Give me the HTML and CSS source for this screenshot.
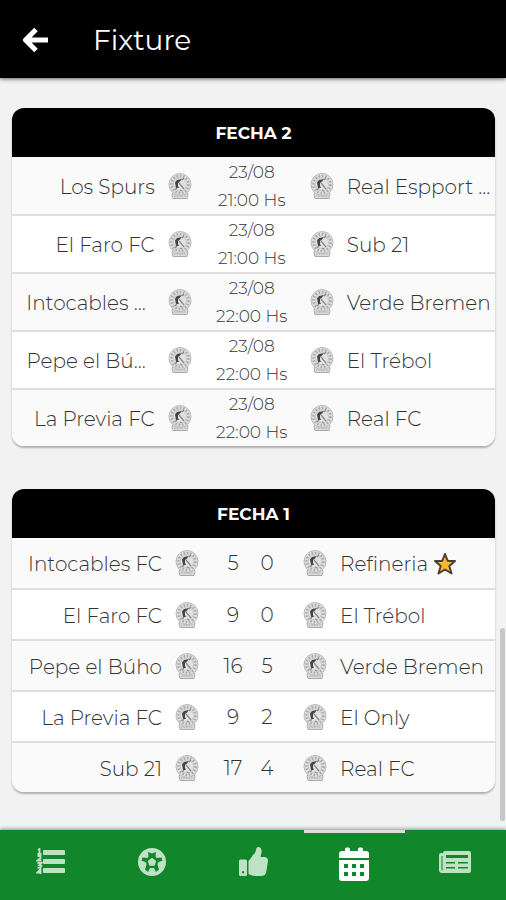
FILE: index.html
```
<!DOCTYPE html>
<html lang="es">
<head>
<meta charset="utf-8">
<meta name="viewport" content="width=device-width, initial-scale=1">
<title>Fixture</title>
<link rel="stylesheet" href="styles.css">
</head>
<body>
<svg class="defs" width="0" height="0" aria-hidden="true">
  <symbol id="crest" viewBox="0 0 24 26">
    <path d="M5 19h14l1 2.500-1 4H5l-1-4z" fill="#dadada" stroke="#aaa" stroke-width="1"/>
    <circle cx="12" cy="11.500" r="11" fill="#dedede" stroke="#bbb" stroke-width="1"/>
    <circle cx="12" cy="11.500" r="8.500" fill="none" stroke="#a8a8a8" stroke-width="2.600" stroke-dasharray="1.500 1.800"/>
    <circle cx="12" cy="11.500" r="6.500" fill="#e2e2e2" stroke="#bbb" stroke-width=".6"/>
    <path d="M7 9.500 9 7l5-1-2 2.500-2 1.500v3l1 2-3 0z" fill="#444"/>
    <path d="m11 10 5 6M14 7l2-2M7 17l2-2M12 17l2 1" stroke="#888" stroke-width="1.200"/>
    <path d="M6 23h12" stroke="#aaa" stroke-dasharray="1.500 1"/>
  </symbol>
</svg>
<header class="topbar">
  <button class="back" type="button" aria-label="Volver">
    <svg viewBox="0 0 26 26" width="26" height="26" fill="none" stroke="#fff" stroke-width="5" stroke-linejoin="round"><path d="M26 13H5M14 2.500 3.500 13 14 23.500"/></svg>
  </button>
  <h1 class="title">Fixture</h1>
</header>
<main class="content">
  <section class="card">
    <h2 class="card-title">FECHA 2</h2>
    <table class="matches upcoming">
      <colgroup><col class="home-col"><col class="crest-col"><col class="date-col"><col class="crest-col"><col></colgroup>
      <tbody>
      <tr><td class="home">Los Spurs</td><td class="crest"><svg><use href="#crest"/></svg></td><td class="date">23/08<br>21:00 Hs</td><td class="crest"><svg><use href="#crest"/></svg></td><td class="away">Real Espport ...</td></tr>
      <tr><td class="home">El Faro FC</td><td class="crest"><svg><use href="#crest"/></svg></td><td class="date">23/08<br>21:00 Hs</td><td class="crest"><svg><use href="#crest"/></svg></td><td class="away">Sub 21</td></tr>
      <tr><td class="home cut">Intocables ...</td><td class="crest"><svg><use href="#crest"/></svg></td><td class="date">23/08<br>22:00 Hs</td><td class="crest"><svg><use href="#crest"/></svg></td><td class="away">Verde Bremen</td></tr>
      <tr><td class="home cut">Pepe el Bú...</td><td class="crest"><svg><use href="#crest"/></svg></td><td class="date">23/08<br>22:00 Hs</td><td class="crest"><svg><use href="#crest"/></svg></td><td class="away">El Trébol</td></tr>
      <tr><td class="home">La Previa FC</td><td class="crest"><svg><use href="#crest"/></svg></td><td class="date">23/08<br>22:00 Hs</td><td class="crest"><svg><use href="#crest"/></svg></td><td class="away">Real FC</td></tr>
      </tbody>
    </table>
  </section>
  <section class="card">
    <h2 class="card-title">FECHA 1</h2>
    <table class="matches played">
      <colgroup><col class="home-col"><col class="crest-col"><col class="score-col"><col class="score-col"><col class="crest-col"><col></colgroup>
      <tbody>
      <tr><td class="home">Intocables FC</td><td class="crest"><svg><use href="#crest"/></svg></td><td class="score">5</td><td class="score last">0</td><td class="crest"><svg><use href="#crest"/></svg></td><td class="away">Refineria <svg class="star" viewBox="0 0 24 24" role="img" aria-label="Destacado"><path d="m12 2 2.800 7H22l-5.700 5 2.200 7.500L12 17.500l-6.500 4L7.700 14 2 9h7.200z"/></svg></td></tr>
      <tr><td class="home">El Faro FC</td><td class="crest"><svg><use href="#crest"/></svg></td><td class="score">9</td><td class="score last">0</td><td class="crest"><svg><use href="#crest"/></svg></td><td class="away">El Trébol</td></tr>
      <tr><td class="home">Pepe el Búho</td><td class="crest"><svg><use href="#crest"/></svg></td><td class="score">16</td><td class="score last">5</td><td class="crest"><svg><use href="#crest"/></svg></td><td class="away">Verde Bremen</td></tr>
      <tr><td class="home">La Previa FC</td><td class="crest"><svg><use href="#crest"/></svg></td><td class="score">9</td><td class="score last">2</td><td class="crest"><svg><use href="#crest"/></svg></td><td class="away">El Only</td></tr>
      <tr><td class="home">Sub 21</td><td class="crest"><svg><use href="#crest"/></svg></td><td class="score">17</td><td class="score last">4</td><td class="crest"><svg><use href="#crest"/></svg></td><td class="away">Real FC</td></tr>
      </tbody>
    </table>
  </section>
  <span class="scroll-thumb"></span>
</main>
<nav class="tabs">
  <a class="tab" href="#posiciones" aria-label="Posiciones">
    <svg viewBox="0 0 30 28" width="30" height="28"><g><rect x="7" y="2" width="22" height="5" rx="1"/><rect x="7" y="11" width="22" height="5" rx="1"/><rect x="7" y="20" width="22" height="5" rx="1"/></g><path d="M2 2 3.500 1v5M1.500 6h4M1.500 8h3v2l-3 2.500h4M1.500 15h4l-2 2c3 0 2.500 3-2 2.500M4.500 26v-5l-3 3.500h4" fill="none" stroke="#c0e2c4" stroke-width="1.800"/></svg>
  </a>
  <a class="tab" href="#goleadores" aria-label="Goleadores">
    <svg viewBox="0 0 28 28" width="28" height="28"><circle cx="14" cy="14" r="14"/><path fill="#12862b" d="m10 4 4 1.500L18 4l-.5 4.500 1 1.500 5-.5 1 3-4.500 2-.5 2 1.500 5-3 2.500-2-4h-4l-2 4-3-2.500 1.500-5-.5-2-4.500-2 1-3 5 .5 1-1.500z"/><path d="m14 9.800 4.200 3.100-1.600 4.900h-5.200l-1.600-4.900z"/></svg>
  </a>
  <a class="tab" href="#votar" aria-label="Votar">
    <svg viewBox="0 0 29 29" width="29" height="29"><path fill-rule="evenodd" d="M1.500 12.500h5Q8 12.500 8 14v13.500Q8 29 6.500 29h-5Q0 29 0 27.500V14q0-1.500 1.500-1.500M4 24a1.200 1.200 0 1 0 .1 0z"/><path d="M9.500 14c3-3 3.500-5.500 6-7.500C17.500 5 16.500 0 19 0c3 0 4 3 3.500 5.500L21.500 10H26q3 .5 3 3.500l-1.500 10Q27 29 22 29h-6q-3 0-6.500-2z"/></svg>
  </a>
  <a class="tab active" href="#fixture" aria-label="Fixture" aria-current="page">
    <svg viewBox="0 0 30 34" width="30" height="34"><path d="M6 4V2q0-1.500 1.500-1.500h2Q11 .5 11 2v2h8V2q0-1.500 1.500-1.500h2Q24 .5 24 2v2h3q3 0 3 3v4H0V7q0-3 3-3z"/><path fill-rule="evenodd" d="M0 13h30v18q0 3-3 3H3q-3 0-3-3zM5 17v4h4v-4zM13 17v4h4v-4zM21 17v4h4v-4zM5 25v4h4v-4zM13 25v4h4v-4zM21 25v4h4v-4z"/></svg>
  </a>
  <a class="tab" href="#noticias" aria-label="Noticias">
    <svg viewBox="0 0 32 24" width="32" height="24"><path fill-rule="evenodd" d="M6 1h24q2 0 2 2v18q0 2-2 2H3q-3 0-3-3V5q0-2 2-2h2q0-2 2-2zM2.500 6v14q0 .5.500.5t.500-.5V6zM7 5v3h22V5zM7 12v1.500h9V12zM19 12v1.500h10V12zM7 17v1.500h9V17zM19 17v1.500h10V17z"/></svg>
  </a>
</nav>
</body>
</html>
```
FILE: styles.css
```
* { box-sizing: border-box; }

body {
  margin: 0;
  min-height: 100vh;
  display: flex;
  flex-direction: column;
  background: #f2f2f2;
  color: #333;
  font-family: Montserrat, Inter, sans-serif;
  font-weight: 300;
}

.defs { position: absolute; }

.topbar {
  display: flex;
  align-items: center;
  gap: 45px;
  height: 78px;
  padding: 2px 22px 0;
  background: #000;
  color: #fff;
  box-shadow: 0 1px 4px rgba(0, 0, 0, .6);
}

.back {
  display: flex;
  padding: 0;
  border: 0;
  background: none;
}

.title {
  margin: 0;
  font-size: 28px;
  font-weight: 400;
}

.content {
  position: relative;
  flex: 1;
  display: flex;
  flex-direction: column;
  gap: 43px;
  padding: 30px 11px 36px 12px;
}

.card {
  overflow: hidden;
  border-radius: 12px;
  background: #fff;
  box-shadow: 0 2px 2px rgba(0, 0, 0, .28);
}

.card-title {
  margin: 0;
  padding-top: 1px;
  background: #000;
  color: #fff;
  font-size: 17px;
  font-weight: 700;
  line-height: 48px;
  text-align: center;
}

.matches {
  width: 100%;
  table-layout: fixed;
  border-collapse: collapse;
  font-size: 20px;
}

.matches td {
  padding: 2px 0 0;
  white-space: nowrap;
}

.matches tr { border-bottom: 2px solid #dedede; }
.matches tr:last-child { border-bottom: 0; }
.matches tr:nth-child(odd) { background: #fafafa; }

.upcoming tr { height: 58px; }
.upcoming tr:last-child { height: 57px; }
.played tr { height: 51px; }
.played tr:last-child { height: 50px; }

.upcoming .home-col { width: 31%; }
.played .home-col { width: 157px; }
.crest-col { width: 36px; }
.date-col { width: 106px; }
.score-col { width: 46px; }

.matches .home {
  padding-right: 7px;
  text-align: right;
}

.matches .cut { padding-right: 16px; }
.matches .away { padding-left: 7px; }

.matches .date {
  padding: 0 0 0 2px;
  font-size: 17px;
  line-height: 28px;
  text-align: center;
}

.matches .score {
  padding: 0 0 0 10px;
  text-align: center;
}

.matches .last { padding: 0 14px 0 0; }
.matches .crest { padding: 0; }

.crest svg {
  display: block;
  width: 24px;
  height: 26px;
  margin: 0 auto;
}

.star {
  width: 24px;
  height: 24px;
  vertical-align: -5px;
  fill: #fcb92e;
  stroke: #4a4030;
  stroke-width: 2;
  stroke-linejoin: round;
}

.scroll-thumb {
  position: absolute;
  right: 1px;
  bottom: 9px;
  width: 5px;
  height: 193px;
  border-radius: 3px;
  background: #c8c8c8;
}

.tabs {
  position: sticky;
  bottom: 0;
  display: flex;
  height: 70px;
  background: #12862b;
  box-shadow: 0 -1px 4px rgba(0, 0, 0, .4);
}

.tab {
  flex: 1;
  display: flex;
  align-items: center;
  justify-content: center;
  padding-bottom: 10px;
  border-top: 3px solid transparent;
  fill: #c0e2c4;
}

.active {
  padding-bottom: 5px;
  border-top-color: #dcdcdc;
  fill: #fff;
}
```
